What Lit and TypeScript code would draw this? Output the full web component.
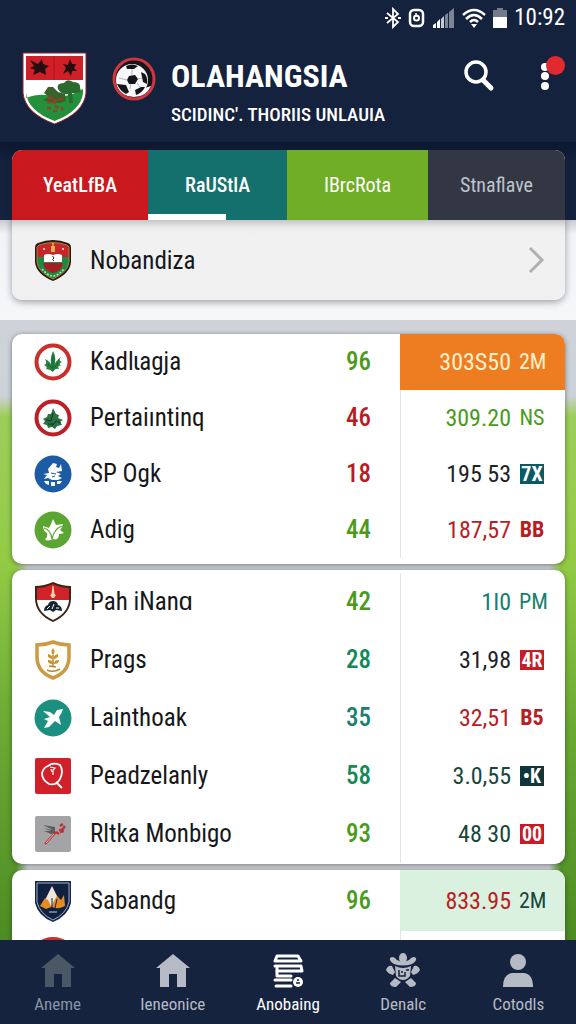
import { LitElement, html, css, svg } from "lit";
import { customElement, property } from "lit/decorators.js";
import { classMap } from "lit/directives/class-map.js";

const crests: Record<string, unknown> = {
  garuda: svg`
    <path d="M4 5Q19-1 34 5Q37 6 37 10V24Q36 36 19 43Q2 36 1 24V10Q1 6 4 5Z" fill="#2b1a10"/>
    <path d="M5 7Q19 2 33 7L35 9V20H3V9Z" fill="#c4272b"/>
    <path d="M3 19H35V24Q34 34 19 41Q4 34 3 24Z" fill="#1c8a43"/>
    <path d="M19 41Q4 34 3 24V9L5 7Q19 2 33 7L35 9V24Q34 34 19 41Z" fill="none" stroke="#c9973f" stroke-width=".8"/>
    <path d="M18 5H20L19.600 8H21V14H17V8H18.400Z" fill="#e0b04c"/>
    <path d="M9 10H11V12H9ZM28 10H30V12H28Z" fill="#f0b9a0"/>
    <path d="M10 17Q14 15 19 17Q24 15 28 17V24H10Z" fill="#fff"/>
    <path d="M18.500 18L20 20L18.500 21.500L20 23" stroke="#222" fill="none"/>
    <path d="M9 25H29Q28 33 19 35Q10 33 9 25Z" fill="#a51f25"/>
    <path d="M8 31L13 36L19 38.500L25 36L30 31" fill="none" stroke="#bde5b9" stroke-width="1.500" stroke-dasharray="2 1.500"/>`,
  leaf: svg`
    <circle cx="19" cy="22" r="16.500" fill="#fff" stroke="#c9302c" stroke-width="4"/>
    <path d="M18 29Q15 20 19 11Q23 18 20 27Q21 21 27 17Q24 21 28 22Q24 23 27 26Q23 25 25 29Q21 28 19 32Q16 29 12 29Q14 27 10 25Q14 24 11 19Q17 21 18 29Z" fill="#24803f"/>
    <path d="M19 15V31M14 24L18 28M24 23L20 28" stroke="#0f5a2b" stroke-width=".7"/>`,
  tree: svg`
    <circle cx="19" cy="22" r="16.500" fill="#fff" stroke="#bd1f27" stroke-width="4"/>
    <path d="M19 12L22 18L25 19L24 22L29 24L26 26L28 29L23 30L21 33L18 31L14 32L13 29L9 28L11 25L9 23L13 21L14 18L17 18Z" fill="#2a7043"/>
    <path d="M12 24L17 25L19 17M18 30L22 25L27 27M14 28H20" stroke="#0d3a22" stroke-width="1" fill="none"/>`,
  bird: svg`
    <circle cx="19" cy="22" r="18.500" fill="#1b5ca5"/>
    <path d="M14 17L19 11L23 12L22 15L25 16L27 12L28 19L22 20L27 22L24 24L28 26L24 28L18 28L14 26L10 27L13 23L9 22L15 21Z" fill="#fff"/>
    <path d="M10 29L15 29V33L12 32ZM17 30H21V34H17ZM23 29L28 29L26 32H23Z" fill="#fff"/>
    <path d="M17 21L22 22M18 25L21 24" stroke="#1b5ca5"/>`,
  sprout: svg`
    <circle cx="19" cy="22" r="18.500" fill="#5ba632"/>
    <path d="M17 16L19 11L22 17L29 16Q28 20 26 22L30 25Q27 26 25 26Q25 33 19 31Q12 34 11 31Q14 29 13 25Q9 23 9 18L15 20Z" fill="#fff"/>
    <path d="M10 20Q17 22 18 31M28 18Q20 21 18 31" stroke="#5ba632" stroke-width="1.300" fill="none"/>`,
  candi: svg`
    <path d="M1 6Q10 6 19 2Q28 6 37 6V18Q37 34 19 42Q1 34 1 18Z" fill="#3c2517"/>
    <path d="M3 8Q11 8 19 4Q27 8 35 8V20H3Z" fill="#cf2229"/>
    <path d="M3 20H35Q34 33 19 40Q4 33 3 20Z" fill="#fff"/>
    <path d="M18.500 6H19.500L20.500 14L22 15L20 18H18L16 15L17.500 14Z" fill="#fbd4a0"/>
    <path d="M10 31Q10 26 14 25Q15 21 19 21Q23 21 24 25Q28 26 28 31L22 30L19 32L16 30Z" fill="#17242f"/>
    <path d="M13 29L16 26M18 29L20 24M22 28L25 28" stroke="#fff"/>`,
  wheat: svg`
    <path d="M3 7Q11 7 19 4Q27 7 35 7V19Q35 34 19 40Q3 34 3 19Z" fill="#fffdf8" stroke="#cb9a43" stroke-width="3.500"/>
    <path d="M19 10Q22 14 19 17Q16 14 19 10ZM14 16Q19 17 18 21Q13 20 14 16ZM24 16Q19 17 20 21Q25 20 24 16ZM14 22Q19 22 19 26Q13 26 14 22ZM25 22Q20 22 20 26Q25 26 25 22Z" fill="#c8912f"/>
    <path d="M19 17V29M15 28L22 29M13 32Q19 35 26 31" stroke="#b98530" stroke-width="1.500" fill="none"/>`,
  plane: svg`
    <circle cx="19" cy="22" r="18.500" fill="#1b9080"/>
    <path d="M9 15L16 16L20 19L23 14L29 13Q28 17 25 21L27 29L21 25L15 31L10 32L14 25L10 23L16 21Z" fill="#fff"/>`,
  quill: svg`
    <rect x="1" y="4" width="36" height="36" rx="2" fill="#d2202a"/>
    <path d="M14 12Q19 8 26 11Q30 17 26 25Q22 32 15 30Q8 26 8 19Q10 13 14 12ZM22 28L28 34" fill="none" stroke="#fff" stroke-width="1.800"/>
    <path d="M16 13L21 14L19 16V21M17 15L18 18" stroke="#fff" stroke-width="1.200" fill="none"/>`,
  arrow: svg`
    <rect x="1" y="4" width="36" height="36" rx="2" fill="#a4a4a6"/>
    <path d="M9 13L21 15L21 21L17 22L10 19L17 19L9 16L19 18Z" fill="#5d5d60"/>
    <path d="M11 32L22 20M22 20L25 22M25 18L28 18L31 14M26 14L29 12M26 20L30 19" stroke="#bf343c" stroke-width="2.500" fill="none"/>
    <path d="M12 31L20 22" stroke="#eee" stroke-width=".7"/>`,
  mount: svg`
    <path d="M1 2H37V24Q34 37 19 43Q4 37 1 24Z" fill="#14274f"/>
    <path d="M3 4H35V23Q32 35 19 41Q6 35 3 23Z" fill="#10203f" stroke="#c3cedd" stroke-width=".8"/>
    <path d="M18 7L24 19V28H8L13 17Z" fill="#efe7dc"/>
    <path d="M6 27L11 19L14 21L17 27L20 22L23 17L27 21L30 16L31 27Q25 30 22 29L17 28L12 30Z" fill="#e48b24"/>
    <path d="M18 19V29M23 20L21 29" stroke="#14274f"/>
    <path d="M15 33H23" stroke="#c3cedd"/>`,
  disc: svg`<ellipse cx="19" cy="20" rx="22" ry="19" fill="#c9302c"/>`,
};

const navIcons: Record<string, unknown> = {
  house: svg`<path fill="currentColor" d="M18 2L35 16H31V35H22V22H14V35H5V16H1Z"/>`,
  stack: svg`
    <g fill="none" stroke="currentColor" stroke-width="3" stroke-linejoin="round" stroke-linecap="round">
      <path d="M7 4H28L31 9H5Z"/><path d="M5 14H31L32 19H7"/><path d="M7 16V24H21M5 28H21M6 34H21"/>
    </g>
    <circle cx="28" cy="30" r="5" fill="currentColor"/>
    <path d="M26 31H30M27 28L29 28" stroke="#16233f" stroke-width="1.500"/>`,
  turtle: svg`
    <g fill="currentColor">
      <ellipse cx="18" cy="6" rx="4" ry="5"/>
      <path d="M5 6Q8 3 12 8Q18 11 24 8Q28 3 31 6Q32 9 27 12Q18 15 9 12Q4 9 5 6Z"/>
      <path d="M1 18Q3 13 7 14L10 20L8 23Q3 22 1 18ZM35 18Q33 13 29 14L26 20L28 23Q33 22 35 18Z"/>
      <path d="M10 14Q18 18 26 14L25 24Q22 28 18 28Q14 28 11 24Z"/>
      <path d="M10 26L16 30L11 35Q5 35 5 31ZM26 26L20 30L25 35Q31 35 31 31Z"/>
    </g>
    <path d="M14 18V24H20V20M17 19V21M21 18H24" fill="none" stroke="#16233f" stroke-width="1.500"/>`,
  person: svg`<g fill="currentColor"><circle cx="18" cy="10" r="8"/><path d="M3 35Q3 22 12 21H24Q33 22 33 35Z"/></g>`,
};

interface Row {
  crest: string;
  name: string;
  score: string;
  tone: string;
  amount: string;
  amountTone: string;
  unit: string;
  unitTone: string;
  fill?: string;
}

const r = (
  crest: string, name: string, score: string, tone: string,
  amount: string, amountTone: string, unit: string, unitTone: string, fill = "",
): Row => ({ crest, name, score, tone, amount, amountTone, unit, unitTone, fill });

const first: Row[] = [
  r("leaf", "Kadlɩagja", "96", "green", "303S50", "cream", "2M", "cream", "orange"),
  r("tree", "Pertaiıntinq", "46", "red", "309.20", "green", "NS", "green"),
  r("bird", "SP Ogk", "18", "red", "195 53", "ink", "7X", "box-teal"),
  r("sprout", "Adig", "44", "green", "187,57", "red", "BB", "red bold"),
];
const second: Row[] = [
  r("candi", "Pah iNanɑ", "42", "green", "1I0", "teal", "PM", "teal"),
  r("wheat", "Prags", "28", "emerald", "31,98", "ink", "4R", "box-red"),
  r("plane", "Lainthoak", "35", "teal", "32,51", "red", "B5", "red bold"),
  r("quill", "Peadzelanly", "58", "emerald", "3.0,55", "pine", "•K", "box-pine"),
  r("arrow", "Rltka Monbigo", "93", "green", "48 30", "pine", "00", "box-red"),
];
const third: Row[] = [
  r("mount", "Sabandg", "96", "green", "833.95", "red", "2M", "pine", "mint"),
  r("disc", "", "", "green", "", "ink", "", "ink"),
];

@customElement("score-card")
class ScoreCard extends LitElement {
  @property({ attribute: false }) rows: Row[] = [];
  @property() size = "compact";

  static styles = css`
    :host { display: block; background: #fff; border-radius: 10px; overflow: hidden; box-shadow: 0 1px 5px rgba(20, 25, 40, .5); }
    table { width: 100%; border-collapse: separate; border-spacing: 0; table-layout: fixed; }
    .compact { margin-bottom: 6px; }
    .compact td { height: 56px; }
    .regular { margin: 3px 0 1px; }
    .regular td { height: 58px; }
    .tall td { height: 61px; }
    .tall tr + tr td { height: 54px; }
    td { padding: 0; line-height: 32px; white-space: nowrap; }
    .team { font-size: 25px; color: #15171a; }
    .label { display: flex; align-items: center; gap: 18px; padding-left: 22px; }
    .label svg { width: 38px; height: 44px; flex: none; }
    .score { width: 78px; font-size: 25px; font-weight: 500; text-align: right; }
    .score span { padding-right: 29px; }
    .value { box-sizing: border-box; width: 165px; border-left: 1px solid #e2e5e8; }
    .pair { display: flex; justify-content: flex-end; align-items: center; gap: 8px; padding-right: 20px; font-size: 24px; }
    .unit { width: 26px; font-size: 22px; line-height: 22px; text-align: center; }
    .green { color: #4a9a1c; }
    .red { color: #b81d24; }
    .teal { color: #17806f; }
    .emerald { color: #128a57; }
    .pine { color: #17473a; }
    .ink { color: #1d2227; }
    .cream { color: #fdf0cf; }
    .bold { font-weight: 700; }
    .box-teal, .box-red, .box-pine { width: 24px; margin: 0 1px; font-size: 20px; line-height: 20px; font-weight: 700; color: #fff; }
    .box-teal { background: #0c5964; }
    .box-red { background: #c41e27; }
    .box-pine { background: #12353a; }
    .orange { background: #ee7d22; border-color: #ee7d22; }
    .mint { background: #daf1df; border-color: #daf1df; }
  `;

  render() {
    return html`<table class=${this.size}>
      <tbody>
        ${this.rows.map((row) => html`<tr>
          <td class="team"><div class="label">
            <svg viewBox="0 0 38 44" aria-hidden="true">${crests[row.crest]}</svg><span>${row.name}</span>
          </div></td>
          <td class="score ${row.tone}"><span>${row.score}</span></td>
          <td class="value ${row.fill}"><div class="pair">
            <span class=${row.amountTone}>${row.amount}</span>${row.unit
              ? html`<span class="unit ${row.unitTone}">${row.unit}</span>` : ""}
          </div></td>
        </tr>`)}
      </tbody>
    </table>`;
  }
}

@customElement("app-root")
class AppRoot extends LitElement {
  static styles = css`
    :host { display: flex; flex-direction: column; height: 100vh; overflow: hidden; font-family: "Roboto Condensed", Roboto, "Liberation Sans", sans-serif; background: #f4f5f7; }
    * { box-sizing: border-box; }
    button { border: 0; padding: 0; margin: 0; background: none; font: inherit; color: inherit; }
    a { color: inherit; text-decoration: none; }
    header { flex: none; background: #15223e; color: #fff; }
    .status { display: flex; justify-content: flex-end; align-items: center; height: 36px; padding: 0 11px 0 0; gap: 7px; font-size: 23px; line-height: 24px; }
    .status svg { height: 22px; }
    .bar { display: flex; align-items: center; height: 106px; padding: 0 11px 2px 22px; }
    .shield { width: 65px; height: 74px; }
    .ball { width: 44px; height: 44px; margin: 0 15px 18px 25px; }
    .titles { flex: 1; white-space: nowrap; padding-top: 14px; }
    h1 { margin: 0; font-size: 32px; line-height: 40px; font-weight: 700; }
    .sub { margin: 0; font-size: 19px; line-height: 38px; font-weight: 500; }
    .actions { display: flex; gap: 40px; margin-bottom: 20px; }
    .actions button { position: relative; height: 44px; }
    .actions svg { display: block; height: 44px; }
    .dot { position: absolute; top: 0; right: 0; width: 19px; height: 19px; border-radius: 50%; background: #e02a30; }
    .top { flex: none; padding: 8px 11px 20px 12px; background: linear-gradient(#0c1730, #15223e 20px, #15223e 78px, #c9ccd2 78px, #f1f3f6 92px, #f6f7f9); }
    .panel { border-radius: 10px; overflow: hidden; background: #f0f0f0; box-shadow: 0 2px 7px rgba(20, 25, 40, .4); }
    .tabs { display: grid; grid-template-columns: 136fr 139fr 141fr 137fr; height: 70px; }
    .tabs button { position: relative; color: #fff; font-size: 20px; font-weight: 500; }
    .tabs .t1 { background: #c9191f; }
    .tabs .t2 { background: #14706c; }
    .tabs .t3 { background: #70ae27; font-weight: 400; }
    .tabs .t4 { background: #323743; color: #bfc3cc; font-weight: 400; }
    .tabs .active::after { content: ""; position: absolute; left: 0; bottom: 0; width: 56%; height: 6px; background: #fff; }
    .featured { display: flex; align-items: center; gap: 18px; height: 80px; padding: 0 20px 0 22px; font-size: 25px; color: #15171a; background: linear-gradient(#c6c6c6, #ececec 8px, #f1f1f1 14px, #f0f0f0); }
    .featured span { flex: 1; }
    .crest { width: 38px; height: 46px; }
    .chev { width: 18px; height: 28px; }
    main { flex: 1; min-height: 0; overflow: hidden; padding: 14px 11px 0 12px; background: linear-gradient(#cfd3d9, #cdd1d9 76px, #9dce5a 96px, #93cb45 240px, #6cab34 400px, #4d8c22); }
    .cards { display: flex; flex-direction: column; gap: 6px; background: linear-gradient(90deg, transparent 4px, #d4d6d9 16px, #d4d6d9 calc(100% - 16px), transparent calc(100% - 4px)); }
    .cards score-card { flex: none; }
    nav { flex: none; display: grid; grid-template-columns: repeat(5, 1fr); height: 84px; background: #16233f; }
    nav a { display: flex; flex-direction: column; align-items: center; padding-top: 12px; gap: 4px; font-size: 17px; line-height: 24px; color: #b6bac4; }
    nav svg { width: 36px; height: 36px; }
    nav .dim { color: #8a93a3; }
    nav .dim svg { color: #4a5765; }
    nav .on { color: #fff; }
  `;

  private nav = [
    { icon: "house", text: "Aneme", dim: true, on: false },
    { icon: "house", text: "Ieneonice", dim: false, on: false },
    { icon: "stack", text: "Anobaing", dim: false, on: true },
    { icon: "turtle", text: "Denalc", dim: false, on: false },
    { icon: "person", text: "Cotodls", dim: false, on: false },
  ];

  render() {
    return html`
      <header>
        <div class="status">
          <svg viewBox="0 0 16 22" fill="none" stroke="#fff" stroke-width="1.800"><path d="M2 6L13 15L8 20V2L13 7L2 16M0 11H3M13 11H16"/></svg>
          <svg viewBox="0 0 18 22" fill="none" stroke="#fff" stroke-width="2.500"><rect x="2" y="3" width="13" height="16" rx="4"/><circle cx="8.500" cy="11" r="2.500" stroke-width="2"/><path d="M8 6V10" stroke-width="1.500"/></svg>
          <svg viewBox="0 0 22 22"><path d="M0 21V18L3 16V21ZM4 21V15L7 12V21Z" fill="#fff"/><path d="M8 21V12L11 9V21Z" fill="#c5cad3"/><path d="M12 21V8L15 6V21ZM16 21V5L21 1V21Z" fill="#7c8596"/></svg>
          <svg viewBox="0 0 24 22" fill="none" stroke="#fff" stroke-width="2.500"><path d="M1 8Q12-2 23 8M4 12Q12 4 20 12M8 15Q12 11 16 15"/><path d="M9 17H15L12 21Z" fill="#fff" stroke="none"/></svg>
          <svg viewBox="0 0 14 22"><path d="M4 1H10V3H14V10H0V3H4Z" fill="#747b88"/><path d="M0 10H14V21H0Z" fill="#fff"/></svg>
          <span>10:92</span>
        </div>
        <div class="bar">
          <svg class="shield" viewBox="0 0 65 74" aria-hidden="true">
            <path d="M1 2H64V42Q62 62 32.500 73Q3 62 1 42Z" fill="#fff" stroke="#8f2730"/>
            <path d="M4 5H61V29H4Z" fill="#d01f26"/><path d="M32 5V29" stroke="#a5161d"/>
            <path d="M8 9L16 13L20 8L21 13L27 15L23 18L24 24L18 21L11 24L13 19L8 17L12 15ZM41 13L46 14L48 8L50 13L54 13L52 17L55 20L50 20L49 25L46 20L41 23L44 17Z" fill="#250d10"/>
            <path d="M4 47Q20 41 32 46Q45 47 61 38V42Q59 60 32.500 70Q6 60 4 42Z" fill="#25903b"/>
            <path d="M36 38Q34 32 42 32Q45 27 51 31Q59 31 58 37Q61 42 53 42H50L51 52H47L46 43Q39 44 36 38Z" fill="#2b6b30"/>
            <path d="M22 42L26 36L31 36L36 41L43 43L44 50L38 52L27 51L21 49L27 46Z" fill="#37622a"/>
            <path d="M26 47H32M31 50L42 47M25 51L35 52M25 57H29M31 60H35M39 56L42 60M33 55L37 57" stroke="#8d4426" stroke-width="2.500" stroke-dasharray="4 1"/>
          </svg>
          <svg class="ball" viewBox="0 0 44 44" aria-hidden="true">
            <circle cx="22" cy="22" r="20" fill="#15151c" stroke="#cf363d" stroke-width="3"/>
            <path d="M5 29Q20 36 39 29Q34 40 22 40Q10 40 5 29Z" fill="#fff"/>
            <circle cx="20" cy="23" r="16" fill="#f8f8fa"/>
            <path d="M17 19L23 18L26 22L23 27L17 27L15 23ZM14 9Q20 6 26 9L22 12L15 12ZM29 15L33 17Q36 21 35 27L31 25ZM5 27L14 28L17 35L14 37Q8 34 5 27ZM23 33L29 30L33 30Q30 36 24 38Z" fill="#15151c"/>
            <path d="M19 27L18 32M25 26L28 30M26 22L30 21M20 12L20 18M15 23L7 21" stroke="#b5b5ba"/>
          </svg>
          <div class="titles"><h1>OLAHANGSIA</h1><p class="sub">SCIDINC'. THORIIS UNLAUIA</p></div>
          <div class="actions">
            <button aria-label="Search"><svg viewBox="0 0 32 44" fill="none" stroke="#fff"><circle cx="13" cy="16" r="10" stroke-width="3.500"/><path d="M20 24L28 32" stroke-width="5" stroke-linecap="round"/></svg></button>
            <button aria-label="More"><svg viewBox="0 0 30 44" fill="#fff"><circle cx="10" cy="11" r="4"/><circle cx="10" cy="20" r="4"/><circle cx="10" cy="30" r="4"/></svg><i class="dot"></i></button>
          </div>
        </div>
      </header>
      <section class="top">
        <div class="panel">
          <div class="tabs" role="tablist">
            <button class="t1" role="tab">YeatLfBA</button>
            <button class="t2 active" role="tab" aria-selected="true">RaUStlA</button>
            <button class="t3" role="tab">IBrcRota</button>
            <button class="t4" role="tab">Stnaflave</button>
          </div>
          <a class="featured" href="#team">
            <svg class="crest" viewBox="0 0 38 44" aria-hidden="true">${crests.garuda}</svg>
            <span>Nobandiza</span>
            <svg class="chev" viewBox="0 0 18 28" fill="none" stroke="#b0b0b0" stroke-width="3"><path d="M3 2L15 14L3 26"/></svg>
          </a>
        </div>
      </section>
      <main>
        <div class="cards">
          <score-card size="compact" .rows=${first}></score-card>
          <score-card size="regular" .rows=${second}></score-card>
          <score-card size="tall" .rows=${third}></score-card>
        </div>
      </main>
      <nav>
        ${this.nav.map((n) => html`<a href="#${n.icon}" class=${classMap({ dim: n.dim, on: n.on })}>
          <svg viewBox="0 0 36 36" aria-hidden="true">${navIcons[n.icon]}</svg><span>${n.text}</span>
        </a>`)}
      </nav>
    `;
  }
}
